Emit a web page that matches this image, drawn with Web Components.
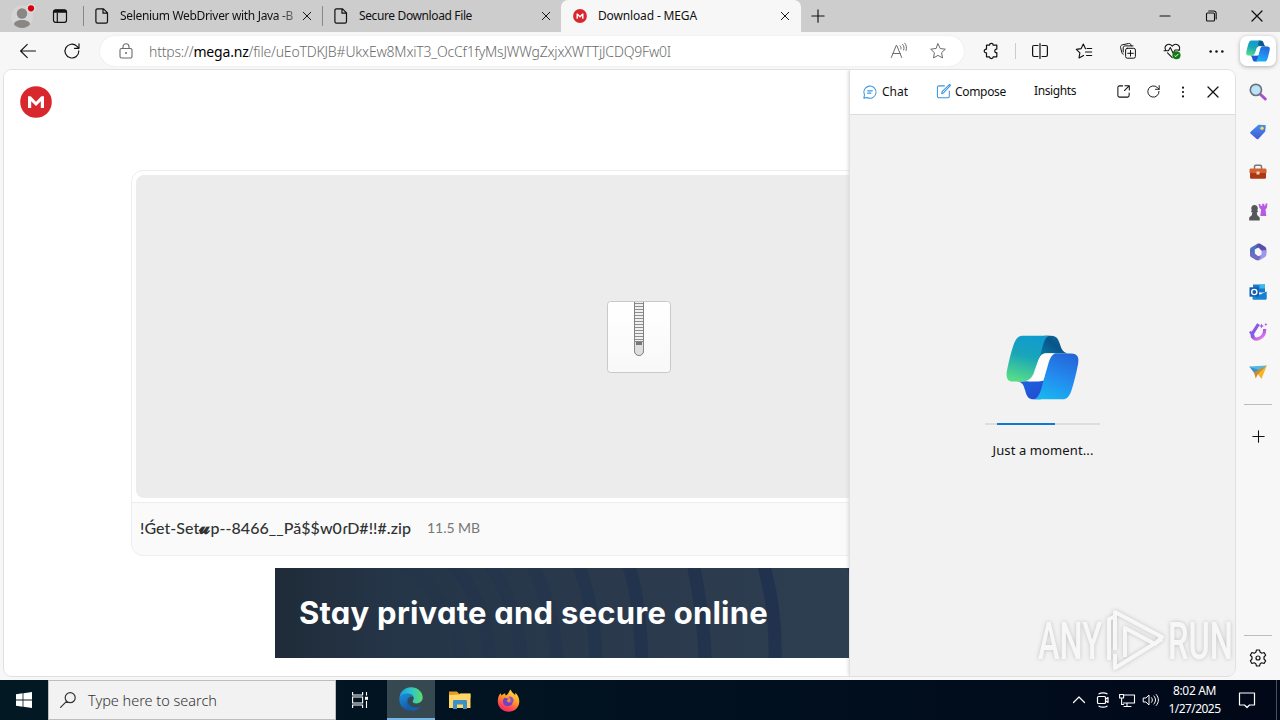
<!DOCTYPE html>
<html lang="en">
<head>
<meta charset="utf-8">
<title>Download - MEGA</title>
<style>
    body {
        margin: 0;
        width: 1280px;
        height: 720px;
        overflow: hidden;
        background: #f7f7f7;
        color: #111;
        font-family: "Noto Sans", "Open Sans", sans-serif;
        font-size: 12px;
    }
</style>
</head>
<body>
<browser-window></browser-window>
<task-bar></task-bar>

<script>
const line = (d, w = 1.1) => `<path d="${d}" fill="none" stroke="currentColor" stroke-width="${w}" stroke-linecap="round" stroke-linejoin="round"/>`;

// every icon is [viewBox, markup]
const icons = {
    profile: ['0 0 24 24', `<circle cx="12" cy="12.500" r="11" fill="#d5d5d5"/><circle cx="12" cy="9.500" r="5.200" fill="#898683"/><path d="M4 20.500c0-3 3.500-4.500 8-4.500s8 1.500 8 4.500c-2 2.300-4.500 3.500-8 3.500s-6-1.200-8-3.500z" fill="#898683"/><circle cx="21" cy="4.300" r="4.600" fill="#dcdcdc"/><circle cx="21" cy="4.300" r="3.100" fill="#d9000c"/>`],
    tabs: ['0 0 16 16', line('M3.500 1.800h9a2 2 0 0 1 2 2v8.500a2 2 0 0 1-2 2h-9a2 2 0 0 1-2-2V3.800a2 2 0 0 1 2-2zM5.300 5v9', 1.2) + '<path d="M1.500 3.300L3 1.800h10l1.500 1.500v1.500h-13z" fill="currentColor"/>'],
    page: ['0 0 16 16', line('M3.500.8h6l4 4v8.700a1.600 1.600 0 0 1-1.600 1.600H3.500a1.600 1.600 0 0 1-1.600-1.600V2.400A1.600 1.600 0 0 1 3.500.8zM9 1v4.200h4.300', 1.2)],
    close: ['0 0 16 16', line('M3 3l10 10M13 3L3 13', 1.3)],
    plus: ['0 0 16 16', line('M8 1v14M1 8h14', 1.3)],
    min: ['0 0 16 16', line('M3 8h10', 1.1)],
    restore: ['0 0 16 16', line('M4.500 5h6a1 1 0 0 1 1 1v6a1 1 0 0 1-1 1h-6a1 1 0 0 1-1-1V6a1 1 0 0 1 1-1zM5.700 3h5a2.500 2.500 0 0 1 2.500 2.500V11')],
    back: ['0 0 16 16', line('M15.500 8H.8M7.300 1.300L.6 8l6.700 6.700', 1.1)],
    reload: ['0 0 16 16', line('M14.800 7.900a6.900 6.900 0 1 1-2-4.700L15 5.300M15 .8v4.500h-4.500', 1.15)],
    lock: ['0 0 16 16', line('M3.500 5.500h9a1.500 1.500 0 0 1 1.500 1.500v6.500a1.500 1.500 0 0 1-1.500 1.500h-9A1.500 1.500 0 0 1 2 13.500V7a1.500 1.500 0 0 1 1.500-1.500zM5 5.300V3.700a3 3 0 0 1 6 0v1.600') + '<circle cx="8" cy="10" r="1" fill="currentColor"/>'],
    aloud: ['0 0 16 16', line('M.3 14.500L5.300 2.300h.4l5 12.200M2 10.500h7.200M9 2.800c1 .9 1.200 2 .9 3.200M11.500 1.300c1.500 1.500 1.900 3.500 1.200 5.700M13.800.2c1.700 2 2.100 4.500 1.300 7.300', 1)],
    star: ['0 0 16 16', line('M8 .8l2.200 4.700 5.100.7-3.700 3.500.9 5.200L8 12.400l-4.500 2.500.9-5.200L.7 6.200l5.100-.7z', 1)],
    puzzle: ['0 0 16 16', line('M3.500 2.200h3c0-2.400 3.700-2.400 3.700 0h3.600v3.900c-2.700-.4-2.700 4 0 3.600v4.100h-3.600c0 2.300-3.700 2.300-3.700 0h-3V9.900c-3 .3-3-4 0-3.700z', 1.2)],
    split: ['0 0 16 16', line('M6 2.500H2a1.400 1.400 0 0 0-1.400 1.400v8.200A1.400 1.400 0 0 0 2 13.500h4M10 2.500h4a1.400 1.400 0 0 1 1.400 1.400v8.200a1.400 1.400 0 0 1-1.400 1.400h-4M8 .5v15', 1.2)],
    favs: ['0 0 16 16', line('M9.500 5.700L7.300 1 5.200 5.600.3 6.400l3.600 3.500-.9 5 4.600-2.500M11 5.500h4.700M9.500 9h6.200M10.500 12.500h5.200')],
    stack: ['0 0 16 16', line('M7.300 5.300h6.400a1.700 1.700 0 0 1 1.700 1.700v6.500a1.700 1.700 0 0 1-1.700 1.700H7.300a1.700 1.700 0 0 1-1.700-1.700V7a1.700 1.700 0 0 1 1.700-1.700zM10.500 7.500v5.600M7.700 10.300h5.600M3.300 11.200c-1-.2-1.300-.8-1.500-1.700L.6 4.500C.3 3 1 2.200 2.200 1.900L8.500.5c1.300-.2 2.200.3 2.500 1.500l.2.800M3.200 9V4.900c0-1.300.8-2 2-2H13', 1)],
    heart: ['0 0 18 18', line('M2 8C-1 3 5-1 8.800 3.300 12.500-1 18.500 3 15.800 8M3.700 10.500l5 5M0 8.300h4.700l2-3.500 3 6 2-3.500h5', 1.1)+ '<circle cx="13.200" cy="13" r="4.300" fill="#107c10"/><path d="M11.200 13.200l1.300 1.200 2.700-2.900" stroke="#fff" fill="none"/>'],
    dots: ['0 0 16 16', '<circle cx="2.500" cy="8" r="1.200"/><circle cx="8" cy="8" r="1.200"/><circle cx="13.500" cy="8" r="1.200"/>'],
    vdots: ['0 0 16 16', '<circle cx="8" cy="3" r="1.200"/><circle cx="8" cy="8" r="1.200"/><circle cx="8" cy="13" r="1.200"/>'],
    open: ['0 0 16 16', line('M7 2H3.700A1.700 1.700 0 0 0 2 3.700v8.600A1.700 1.700 0 0 0 3.700 14h8.600a1.700 1.700 0 0 0 1.700-1.700V9.500M9.500 1.800h4.700v4.700M14 2L9 7', 1.1)],
    chat: ['0 0 16 16', `<g color="#3a94dd">${line('M1 15l.7-3.600A7 7 0 1 1 4.500 14.300zM5.300 6.700h5.400M5.300 9.300h3.700', 1.2)}</g>`],
    compose: ['0 0 16 16', `<g color="#3a94dd">${line('M9 2H3.200A1.700 1.700 0 0 0 1.500 3.700v9.300a1.700 1.700 0 0 0 1.700 1.700h9.300a1.700 1.700 0 0 0 1.700-1.700V7.500M6 10.300l.7-2.500L14.500.5l1 1-7.300 7.800z', 1.1)}</g>`],
    mega: ['0 0 32 32', '<circle cx="16" cy="16" r="15.800" fill="#d9272e"/><path d="M8 22V10.300h2.700l5.300 5.400 5.300-5.400H24V22h-3.200v-6.700L16 20l-4.800-4.700V22z" fill="#fff"/>'],
    copilot: ['109 46 220 196', `
        <defs>
            <linearGradient id="l" x1=".6" y1="0" x2=".35" y2="1"><stop stop-color="#109bd0"/><stop offset=".45" stop-color="#19a5b9"/><stop offset="1" stop-color="#55dc88"/></linearGradient>
            <linearGradient id="r" x1=".7" y1="0" x2=".3" y2="1"><stop stop-color="#2467d8"/><stop offset=".5" stop-color="#238bf0"/><stop offset="1" stop-color="#19b5ee"/></linearGradient>
            <linearGradient id="t" x1="0" y1="1" x2="1" y2="0"><stop stop-color="#0786b0"/><stop offset=".6" stop-color="#095488"/><stop offset="1" stop-color="#0c79af"/></linearGradient>
            <linearGradient id="b" x1="0" y1="0" x2="1" y2="1"><stop stop-color="#1a65e0"/><stop offset="1" stop-color="#2548d0"/></linearGradient>
        </defs>
        <path d="M225 48h20c17 0 23 12 27 27 5 17 11 25 24 27h-70l-22 20z" fill="url(#t)"/>
        <path d="M140 186c20 1 22 12 27 28 4 18 11 26 25 26h22l20-56z" fill="url(#b)"/>
        <path d="M158 48h82c-15 3-19 27-26 52l-18 50c-6 22-16 36-38 36h-28c-18 0-22-14-18-34 6-27 12-54 20-77 6-17 14-27 26-27z" fill="url(#l)"/>
        <path d="M252 102h53c21 0 25 13 21 33-6 30-12 55-20 79-6 18-14 26-26 26h-88c13-2 20-18 26-40l14-60c6-25 8-38 20-38z" fill="url(#r)"/>
        <path d="M232 101h26c-13 5-18 19-22 34l-12 41c-3 8-8 10-17 10h-35c14-2 20-14 25-31l10-33c5-17 13-21 25-21z" fill="#fdfdfd"/>`],
    search: ['0 0 18 18', '<path d="M11 11l5.300 5" stroke="#ad4dcb" stroke-width="3" stroke-linecap="round"/><circle cx="6.900" cy="6.900" r="5.600" fill="#b8e3f8" stroke="#6c747b" stroke-width="1.700"/>'],
    tag: ['0 0 18 18', '<defs><linearGradient id="g" x2="0" y2="1"><stop stop-color="#3f91ee"/><stop offset="1" stop-color="#4957d4"/></linearGradient></defs><path d="M9.500.8l7 .3c.8 0 1.300.6 1.200 1.300l-.6 6-7.500 8.100c-.8.8-1.700.7-2.400 0L.8 11c-.9-.8-.8-1.600 0-2.400z" fill="url(#g)"/><circle cx="13.500" cy="4.800" r="2" fill="#fbd65b"/>'],
    toolbox: ['0 0 18 18', '<path d="M5.500 6V3.500c0-.8.400-1.200 1.200-1.200h4.600c.8 0 1.200.4 1.200 1.200V6" fill="none" stroke="#77777a" stroke-width="1.500"/><path d="M2 5.500h14c1 0 1.500.5 1.500 1.500v3H.5V7c0-1 .5-1.500 1.500-1.500z" fill="#d6602f"/><path d="M1 10h16v4.500c0 .8-.5 1.200-1.200 1.200H2.200C1.500 15.700 1 15.300 1 14.500z" fill="#a93a12"/><path d="M7.500 8.500h3v3h-3z" fill="#f3d3c0"/>'],
    chess: ['0 0 18 18', '<path d="M9.500 1h2v1.800h1.700V.8h2v1.800h1.300V.5H18.500l-.7 4.500-1.300 1.500.8 6.500h-6l.8-6.500-1.600-1.500z" fill="#b65be4"/><path d="M5.500 2a3.200 3.200 0 0 1 2.400 5.500h1v1.800H7.700l.6 3 2.400 2.300V17.500H.2v-2.900l2.600-2.300.6-3H2.200V7.500h1A3.200 3.200 0 0 1 5.500 2z" fill="#55575a"/>'],
    office: ['0 0 18 18', '<path d="M8.500.8L2.500 4.200C1.300 5 1 5.700 1 7v5.300l4.800-2.600V6.500l5.500-3.300z" fill="#4a73c4"/><path d="M8.500.8c1-.6 1.800-.5 2.800 0l4.700 3c1 .7 1.300 1.500 1.300 2.600v4.100l-4.800-2.700-3-3.200-2.800.7z" fill="#5a4fae"/><path d="M17.300 7v4.500c0 1.200-.4 2-1.300 2.500L11 17c-1 .6-2 .5-3 0l-2.300-1.500 6.800-4V7.500z" fill="#9f98ea"/><path d="M1 9v3c0 1 .4 1.700 1.300 2.300L7 17c1 .5 2 .5 3-.2l1.800-3.300-3.300-.8-2.700-2.800z" fill="#706bc5"/><path d="M9.200 5.900l2.900 1.700v3.300l-2.900 1.700-2.900-1.700V7.600z" fill="#f7f7f7"/>'],
    outlook: ['0 0 18 18', '<path d="M4 1.500h12v8H4z" fill="#1c78c9"/><path d="M10.500 1.500H16v4h-5.500z" fill="#37b8f0"/><path d="M3.500 8.500l7.500 3 6.500-3v6.800c0 .8-.4 1.200-1.200 1.200H4.700c-.8 0-1.200-.4-1.200-1.200z" fill="#1c8fda"/><path d="M3.500 16.500L17.500 8.800v6.700c0 .6-.4 1-1 1z" fill="#1781d0"/><path d="M.5 4.300h9.500v9.400H.5z" fill="#0f5fae"/><circle cx="5.300" cy="9" r="2.600" fill="none" stroke="#fff" stroke-width="1.400"/>'],
    magnet: ['0 0 18 18', '<defs><linearGradient id="m" gradientUnits="userSpaceOnUse" x1="3" y1="1" x2="14" y2="17"><stop stop-color="#6a65ec"/><stop offset=".55" stop-color="#a44fe4"/><stop offset="1" stop-color="#f08af0"/></linearGradient></defs><path d="M9.500 1L4 9.700c-2.600 4.500 2 7.500 6.200 5.800 4-1.600 5.600-5 5.500-9.500" fill="none" stroke="url(#m)" stroke-width="3.200"/><path d="M1 8.500l4 5.500" stroke="#7b63e7" stroke-width="2.500"/><path d="M12.500.500l.7 1.800 1.800.7-1.800.7-.7 1.800-.7-1.800-1.800-.7 1.800-.7z" fill="#a65ae6"/><circle cx="16.800" cy="1.500" r="1.100" fill="#a65ae6"/>'],
    plane: ['0 0 18 18', '<path d="M.2 3.500L17.800 2.500l-6.600 6z" fill="#57b7e8"/><path d="M.2 3.500l11.300 4L6 11z" fill="#3a91cf"/><path d="M17.800 2.500L8 10l4.500 6z" fill="#f5b52c"/><path d="M17.800 2.500L5 9.200 6.700 15.500 9 11z" fill="#c98d30"/>'],
    gear: ['0 0 18 18', line('M7.500 1h3l.7 2.300 1.600.9 2.300-.7 1.600 2.700L15 8v2l1.700 1.800-1.600 2.700-2.300-.7-1.600.9-.7 2.300h-3l-.7-2.300-1.600-.9-2.300.7-1.600-2.700L3 10V8L1.300 6.200l1.600-2.700 2.300.7 1.600-.9zM9 7a2 2 0 1 0 0 4 2 2 0 0 0 0-4z', 1.2)],
    zip: ['0 0 64 72', `
        <defs><linearGradient id="z" x2="0" y2="1"><stop stop-color="#fff"/><stop offset="1" stop-color="#f8f8f8"/></linearGradient></defs>
        <rect x=".5" y=".5" width="63" height="71" rx="3" fill="url(#z)" stroke="#c9c9c9"/>
        <path d="M27.500 1v49a4.500 4.500 0 0 0 9 0V1" fill="#f0f0f0" stroke="#818181"/>
        <path d="M28 2.500h8M28 5.500h8M28 8.500h8M28 11.500h8M28 14.500h8M28 17.500h8M28 20.500h8M28 23.500h8M28 26.500h8M28 29.500h8M28 32.500h8M28 35.500h8M28 38.500h8" stroke="#8e8e8e"/>
        <path d="M27.500 40.500h9V50a4.500 4.500 0 0 1-9 0z" fill="#dedede" stroke="#898989"/><rect x="29" y="41" width="6" height="3" fill="#777"/>`],
    windows: ['0 0 16 16', '<path d="M0 2.200L6.600 1.300v6.200H0zM7.400 1.200L16 0v7.500H7.400zM0 8.400h6.600v6.300L0 13.800zM7.400 8.400H16V16l-8.600-1.200z" fill="#fff"/>'],
    find: ['0 0 16 16', line('M10.200.7a5 5 0 1 0 0 10 5 5 0 0 0 0-10zM6.500 9.300L.6 15.300', 1.2)],
    taskview: ['0 0 16 16', '<g fill="none" stroke="#fff" stroke-width="1.100"><path d="M.6 0v3h10V0M.6 16v-3h10v3M.6 5h10v6H.6zM14.500 0v3.500M14.500 9v7"/></g><path d="M13 4.800h3v3h-3z" fill="#fff"/>'],
    edge: ['0 0 24 24', `
        <defs>
            <linearGradient id="e" x2="1"><stop stop-color="#1b9de2"/><stop offset=".5" stop-color="#2fc5c9"/><stop offset="1" stop-color="#5bdc69"/></linearGradient>
            <linearGradient id="f" x2=".6" y2="1"><stop stop-color="#1a91dd"/><stop offset="1" stop-color="#164f9e"/></linearGradient>
        </defs>
        <path d="M.4 11C1 4.500 6 .3 12 .3c7 0 11.700 5 11.700 10 0 4-3 6.200-6.400 6.200-2.600 0-3.800-1-3.600-2.200.2-1 1-1.300 1-3 0-2.200-2.500-4.500-6-4.500-3.600 0-6.800 1.500-8.300 4.200z" fill="url(#e)"/>
        <path d="M.3 12.500C.5 8.700 4.300 6.700 8.700 6.700c3 0 5.300 1.600 5.900 3.500-3-1.600-6.300.8-6.300 4.300 0 4 4 6.400 8 6.400 2.300 0 4-.6 5.700-1.700-2.500 3.200-6 4.600-10 4.600C5.600 23.800.3 19 .3 12.500z" fill="url(#f)"/>
        <path d="M8.800 12.800c-.8 5 4 8.200 8.500 7.700 2 0 3.500-.6 4.700-1.300-2.300 3.300-5.600 4.600-9 4.600-4-1.600-7-6.600-4.200-11z" fill="#1560ac"/>`],
    folder: ['0 0 22 20', '<path d="M0 1.500h8l2 2.200h11.500V8H0z" fill="#e59c24"/><path d="M0 5l10-.5 1.500-1h10V18H0z" fill="#ffd766"/><path d="M4 19v-7.500c0-1 .5-1.500 1.500-1.500h11c1 0 1.500.5 1.500 1.500V19h-4v-4.500H8V19z" fill="#3d91cb"/>'],
    firefox: ['0 0 24 24', `
        <defs><linearGradient id="x" x1=".8" x2=".3" y2="1"><stop stop-color="#ffe64c"/><stop offset=".45" stop-color="#ff9a24"/><stop offset=".8" stop-color="#ff4252"/><stop offset="1" stop-color="#e82a70"/></linearGradient></defs>
        <path d="M3.500 4.500C4 5.600 4.600 6.300 5 6.700 6 5 8 4.500 8.600 4.600c-.1 1 .2 1.600.7 2.100C12 5.500 12 3 14.200.6c.6 2.500 3 3.800 4.800 5.900l.1-2.500c3 2.700 4.500 6.300 4.100 10-.5 5.500-5.300 9.700-11 9.700C6 23.700.8 19 .8 13c0-3.700 1-6.300 2.700-8.500z" fill="url(#x)"/>
        <path d="M8 9c2 0 3 1.200 4.500 1l-2.500 2.300c1 2.500 5 2.500 6.500-.3.300 4-2.500 6-5 6C8 18 6 15.500 6.200 12.500 6.400 10.500 7 9.500 8 9z" fill="#6d44c8"/>
        <path d="M12 8c3-.5 5.500 1.500 5.500 4.500-1.500 2.200-3.500 2.500-5 2 2.300-1.300 2.200-4-.5-6.500z" fill="#8c51cc"/>`],
    chevron: ['0 0 16 16', line('M2.500 10.500L8 5l5.500 5.500', 1.2)],
    camera: ['0 0 16 16', line('M3.500 4.500h6a1 1 0 0 1 1 1v5a1 1 0 0 1-1 1h-6a1 1 0 0 1-1-1v-5a1 1 0 0 1 1-1zM10.500 7.200L13 5.500v5l-2.500-1.700M4 1.800C6 .5 10 .5 12 1.800M4 14.200c2 1.300 6 1.300 8 0', 1.2)],
    network: ['0 0 16 16', line('M5.500 3h10v8h-11M8 11v3.500M5 14.500h7M.6 2.500h4v3.500h-4zM2.600 6v6.500h2', 1.1)],
    sound: ['0 0 16 16', line('M.6 6h2.300L6 3v10l-3.100-3H.6zM8.500 5.700c1.200 1.500 1.200 3.100 0 4.600M10.900 4c2.200 2.700 2.200 5.300 0 8M13.200 2.500c3 3.500 3 7.500 0 11', 1)],
    notice: ['0 0 18 18', line('M1.500 2h15v12h-5L9 16.500 6.500 14h-5z', 1.2)]
};

class UiIcon extends HTMLElement {
    constructor() {
        super();
        this.attachShadow({ mode: 'open' });
    }

    connectedCallback() {
        const [box, body] = icons[this.getAttribute('name')];
        const w = this.getAttribute('w') || 16;
        const h = this.getAttribute('h') || w;
        this.shadowRoot.innerHTML = `
            <style>
                :host { display: inline-flex; flex: none; align-items: center; justify-content: center; }
                svg { display: block; overflow: visible; fill: currentColor; }
            </style>
            <svg width="${w}" height="${h}" viewBox="${box}">${body}</svg>`;
    }
}

// text that is tracked in or out until it takes the given width,
// or squeezed sideways when it has the squeeze attribute
class UiText extends HTMLElement {
    constructor() {
        super();
        this.attachShadow({ mode: 'open' });
        this.shadowRoot.innerHTML = `
            <style>
                :host { display: block; flex: none; white-space: nowrap; }
                span { display: inline-block; transform-origin: 0 50%; }
            </style>
            <span><slot></slot></span>`;
    }

    connectedCallback() {
        const span = this.shadowRoot.querySelector('span');
        const want = Number(this.getAttribute('w'));
        const count = Array.from(this.textContent).length;
        const have = span.getBoundingClientRect().width;
        if (this.hasAttribute('squeeze')) {
            span.style.transform = `scaleX(${want / have})`;
            this.style.width = want + 'px';
        } else {
            span.style.letterSpacing = (want - have) / count + 'px';
        }
    }
}

function define(name, html) {
    const template = document.createElement('template');
    template.innerHTML = html;
    customElements.define(name, class extends HTMLElement {
        constructor() {
            super();
            this.attachShadow({ mode: 'open' });
            this.shadowRoot.appendChild(template.content.cloneNode(true));
        }
    });
}

define('browser-window', `
    <style>
        :host { display: flex; flex-direction: column; height: 680px; background: #f7f7f7; }
        .main { flex: 1; display: flex; min-height: 0; }
        .view {
            display: flex; box-sizing: border-box; width: 1233px; height: 608px; margin: -1px 0 0 3px; overflow: hidden;
            border: 1px solid #e0e0e0; border-radius: 9px; background: #fff;
        }
        mega-page { width: 845px; }
        copilot-panel { flex: 1; }
    </style>
    <tab-strip></tab-strip>
    <address-row></address-row>
    <div class="main">
        <div class="view">
            <mega-page></mega-page>
            <copilot-panel></copilot-panel>
        </div>
        <side-bar></side-bar>
    </div>
    <run-mark></run-mark>
`);

define('tab-strip', `
    <style>
        :host { display: flex; height: 32px; background: #cdcdcd; align-items: center; }
        .profile { margin-left: 10px; }
        .tabs { margin-left: 18px; width: 16px; }
        .first { margin-left: 15px; }
        .new { margin-left: 10px; }
        .min { margin-left: auto; }
        .win { width: 46px; }
        .fade { -webkit-mask-image: linear-gradient(90deg, #000 86%, rgba(0,0,0,.3)); }
    </style>
    <ui-icon class="profile" name="profile" w="24"></ui-icon>
    <ui-icon class="tabs" name="tabs" w="16"></ui-icon>
    <browser-tab class="first"><ui-icon slot="icon" name="page" w="16"></ui-icon><ui-text class="fade" w="173">Selenium WebDriver with Java -B</ui-text></browser-tab>
    <browser-tab><ui-icon slot="icon" name="page" w="16"></ui-icon><ui-text w="113">Secure Download File</ui-text></browser-tab>
    <browser-tab active><ui-icon slot="icon" name="mega" w="14"></ui-icon><ui-text w="99">Download - MEGA</ui-text></browser-tab>
    <ui-icon class="new" name="plus" w="14"></ui-icon>
    <ui-icon class="win min" name="min"></ui-icon>
    <ui-icon class="win" name="restore"></ui-icon>
    <ui-icon class="win" name="close" w="16"></ui-icon>
`);

define('browser-tab', `
    <style>
        :host {
            display: flex; box-sizing: border-box; width: 239px; height: 32px; align-items: center;
            padding: 0 9px 0 11px;
            background: linear-gradient(#888, #888) 0 50% / 1px 20px no-repeat;
        }
        :host([active]) { width: 240px; padding-right: 10px; background: #f7f7f7; border-radius: 7px 7px 0 0; }
        .text { margin-left: 10px; flex: 1; line-height: 30px; }
        slot[name=icon]::slotted(*) { width: 16px; }
    </style>
    <slot name="icon"></slot>
    <div class="text"><slot></slot></div>
    <ui-icon name="close" w="12"></ui-icon>
`);

define('address-row', `
    <style>
        :host { display: flex; height: 38px; align-items: center; background: #f7f7f7; }
        .tool { width: 44px; }
        .nav { padding-left: 6px; display: flex; }
        .pill {
            display: flex; align-items: center; box-sizing: border-box; width: 864px; height: 30px; margin-left: 6px;
            padding: 0 18px; border-radius: 15px; background: #fff; color: #6b6b6b; font-size: 14px; font-weight: 300;
            box-shadow: 0 0 2px #e2e2e2;
        }
        .pill ui-text { margin: 0 auto 0 15px; }
        b { color: #000; font-weight: 400; }
        .star { margin-left: 23px; }
        .puzzle { margin-left: 5px; width: 44px; }
        i { width: 1px; height: 16px; margin: 0 2px 0 2px; background: #ccc; }
        .pilot {
            width: 36px; height: 30px; margin-left: 2px; border-radius: 7px; background: #fff;
            box-shadow: 0 1px 4px rgba(0,0,0,.3);
        }
    </style>
    <div class="nav">
        <ui-icon class="tool" name="back"></ui-icon>
        <ui-icon class="tool" name="reload"></ui-icon>
    </div>
    <div class="pill">
        <ui-icon name="lock"></ui-icon>
        <ui-text w="522">https://<b>mega.nz</b>/file/uEoTDKJB#UkxEw8MxiT3_OcCf1fyMsJWWgZxjxXWTTjJCDQ9Fw0I</ui-text>
        <ui-icon name="aloud"></ui-icon>
        <ui-icon class="star" name="star"></ui-icon>
    </div>
    <ui-icon class="puzzle" name="puzzle"></ui-icon>
    <i></i>
    <ui-icon class="tool" name="split"></ui-icon>
    <ui-icon class="tool" name="favs"></ui-icon>
    <ui-icon class="tool" name="stack"></ui-icon>
    <ui-icon class="tool" name="heart" w="17"></ui-icon>
    <ui-icon class="tool" name="dots" w="17"></ui-icon>
    <ui-icon class="pilot" name="copilot" w="24" h="22"></ui-icon>
`);

define('mega-page', `
    <style>
        :host { display: block; overflow: hidden; background: #fff; }
        .logo { display: block; margin: 16px 0 0 16px; }
        .card {
            box-sizing: border-box; width: 980px; height: 386px; margin: 52px 0 0 127px; padding: 4px 3px 0 4px;
            border: 1px solid #ededed; border-radius: 12px; background: linear-gradient(#fff 331px, #ededed 331px 332px, #fafafa 332px);
        }
        .preview {
            display: flex; align-items: center; justify-content: center;
            width: 1006px; height: 323px; border-radius: 8px; background: #ececec;
        }
        .file { display: flex; align-items: center; height: 60px; padding: 0 0 0 4px; font-family: Lato, "DejaVu Serif", "DejaVu Sans", sans-serif; font-size: 16px; font-weight: 500; line-height: 20px; color: #303233; }
        b { font-weight: 700; font-size: 18px; line-height: 1; }
        .size { margin-left: 16px; font-size: 14px; font-weight: 400; color: #777; }
        .ad {
            display: flex; align-items: center; position: relative; width: 700px; height: 90px; margin: 12px 0 0 271px; overflow: hidden;
            background: linear-gradient(90deg, #1f2b38, #253548 16%, #2b3b4d 55%, #304154);
        }
        .ad svg { position: absolute; left: 0; top: 0; }
        .ad ui-text { position: relative; margin: -1px 0 0 24px; color: #fff; font: 700 31px Inter, sans-serif; font-feature-settings: "cv11"; }
    </style>
    <ui-icon class="logo" name="mega" w="32"></ui-icon>
    <div class="card">
        <div class="preview"><ui-icon name="zip" w="64" h="72"></ui-icon></div>
        <div class="file">
            <ui-text w="271">!Ǵet-Set<b>𝓾</b>p--8466__Pă$$w0ɾD#!!#.zip</ui-text>
            <ui-text class="size" w="53">11.5 MB</ui-text>
        </div>
    </div>
    <div class="ad">
        <svg width="700" height="90" fill="none" stroke="#20324e" stroke-width="13">
            <path d="M130 -5C158 15 183 50 188 95" opacity=".2"/>
            <path d="M176 -5C200 20 214 55 215 95" opacity=".35"/>
            <path d="M214 -5C232 20 246 60 246 95" opacity=".4"/>
            <path d="M257 -5C270 25 281 60 282 95" opacity=".5"/>
            <path d="M303 -5C314 25 321 60 321 95" opacity=".6"/>
            <path d="M353 -5C363 25 366 60 367 95" opacity=".75"/>
            <path d="M418 -5C424 25 430 60 430 95" opacity=".9"/>
            <path d="M488 -5C497 25 501 60 500 95"/>
            <path d="M578 -5C585 25 589 60 589 95"/>
        </svg>
        <ui-text w="469">Stay private and secure online</ui-text>
    </div>
`);

define('copilot-panel', `
    <style>
        :host { display: flex; flex-direction: column; border-left: 1px solid #e2e2e2; background: #f2f2f2; font-size: 12px; box-shadow: 0 0 4px #ccc; }
        header { display: flex; align-items: center; height: 43px; padding: 0 7px 1px 13px; background: #fff; border-bottom: 1px solid #dcdcdc; }
        header > ui-text { margin-left: 4px; }
        header > .chat { margin-left: 5px; }
        .compose { margin-left: 28px; }
        header > .insights { margin: -2px auto 0 28px; }
        .btn { width: 30px; }
        .wait { display: flex; flex-direction: column; align-items: center; margin-top: 220px; }
        .bar { width: 115px; height: 2px; margin: 23px 0 15px; background: linear-gradient(90deg, #ddd 12px, #0f78d0 12px 70px, #ddd 70px); }
        .wait ui-text { margin-left: 1px; font-size: 13px; line-height: 20px; }
    </style>
    <header>
        <ui-icon name="chat" w="14"></ui-icon><ui-text class="chat" w="26">Chat</ui-text>
        <ui-icon class="compose" name="compose" w="15"></ui-icon><ui-text w="51">Compose</ui-text>
        <ui-text class="insights" w="42">Insights</ui-text>
        <ui-icon class="btn" name="open" w="15"></ui-icon>
        <ui-icon class="btn" name="reload" w="13"></ui-icon>
        <ui-icon class="btn" name="vdots" w="14"></ui-icon>
        <ui-icon class="btn" name="close" w="16"></ui-icon>
    </header>
    <div class="wait">
        <ui-icon name="copilot" w="73" h="65"></ui-icon>
        <div class="bar"></div>
        <ui-text w="101">Just a moment...</ui-text>
    </div>
`);

define('side-bar', `
    <style>
        :host { display: flex; flex-direction: column; align-items: center; flex: 1; padding-top: 2px; }
        ui-icon { width: 44px; height: 40px; }
        i { flex: none; width: 28px; height: 1px; background: #bcbcbc; }
        .line { margin: 12px 0 11px; }
        .end { margin-top: auto; }
        .gear { height: 44px; }
    </style>
    <ui-icon name="search" w="18"></ui-icon>
    <ui-icon name="tag"></ui-icon>
    <ui-icon name="toolbox" w="18"></ui-icon>
    <ui-icon name="chess" w="18"></ui-icon>
    <ui-icon name="office" w="18"></ui-icon>
    <ui-icon name="outlook" w="18"></ui-icon>
    <ui-icon name="magnet" w="18"></ui-icon>
    <ui-icon name="plane" w="18"></ui-icon>
    <i class="line"></i>
    <ui-icon name="plus" w="13"></ui-icon>
    <i class="end"></i>
    <ui-icon class="gear" name="gear" w="18"></ui-icon>
`);

// translucent mark over the lower right corner of the panel
define('run-mark', `
    <style>
        :host {
            position: absolute; left: 1038px; top: 604px; opacity: .8; display: flex; align-items: center; height: 74px;
            filter: drop-shadow(0 0 2px #b4b4b4); font: 500 52px Roboto, sans-serif; color: #f9f9f9;
        }
        svg { display: block; }
    </style>
    <ui-text squeeze w="64">ANY</ui-text>
    <svg width="66" height="74">
        <path d="M7 56V15l5-2M13 46V8l47 25-7 7-30-16v29M13 50v14l47-29" fill="none" stroke="#f9f9f9" stroke-width="4" stroke-linejoin="round"/>
    </svg>
    <ui-text squeeze w="65">RUN</ui-text>
`);

define('task-bar', `
    <style>
        :host { display: flex; height: 40px; align-items: center; background: linear-gradient(90deg, #021823, #01101f 60%, #010818); color: #fff; }
        .start { width: 48px; }
        .find {
            display: flex; align-items: center; box-sizing: border-box; width: 288px; height: 40px; padding-left: 11px;
            border: 1px solid #bdbdbd; background: #f2f2f2; color: #333; font-size: 14.5px; font-weight: 300;
        }
        .find ui-text { margin-left: 12px; }
        .app { width: 49px; height: 40px; }
        .view { width: 48px; }
        .on { box-sizing: border-box; width: 48px; margin-left: 3px; border-bottom: 2px solid #76b5e4; background: #364850; }
        .tray { display: flex; align-items: center; margin-left: auto; }
        .tray ui-icon { width: 24px; }
        .clock { width: 53px; margin: 0 1px 0 5px; line-height: 18px; font-size: 12px; display: flex; flex-direction: column; align-items: center; }
        .tray .notice { width: 50px; }
        i { width: 1px; height: 40px; margin: 0 3px 0 4px; background: #45505b; }
    </style>
    <ui-icon class="start" name="windows"></ui-icon>
    <div class="find"><ui-icon name="find"></ui-icon><ui-text w="129">Type here to search</ui-text></div>
    <ui-icon class="view" name="taskview"></ui-icon>
    <ui-icon class="app on" name="edge" w="24"></ui-icon>
    <ui-icon class="app" name="folder" w="22" h="20"></ui-icon>
    <ui-icon class="app" name="firefox" w="23"></ui-icon>
    <div class="tray">
        <ui-icon name="chevron" w="16"></ui-icon>
        <ui-icon name="camera"></ui-icon>
        <ui-icon name="network"></ui-icon>
        <ui-icon name="sound"></ui-icon>
        <div class="clock"><ui-text w="43">8:02 AM</ui-text><ui-text w="52">1/27/2025</ui-text></div>
        <ui-icon class="notice" name="notice" w="18"></ui-icon>
        <i></i>
    </div>
`);

customElements.define('ui-icon', UiIcon);
// last, so that the fonts around each text are already in place when it is measured
customElements.define('ui-text', UiText);
</script>
</body>
</html>
